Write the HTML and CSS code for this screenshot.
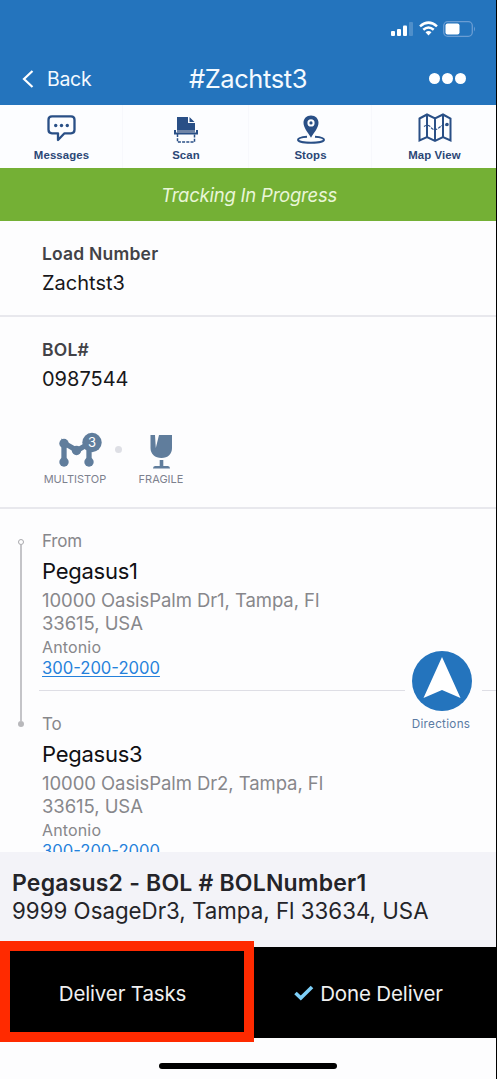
FILE: index.html
```html
<!DOCTYPE html>
<html lang="en">
<head>
<meta charset="utf-8">
<title>#Zachtst3</title>
<link rel="stylesheet" href="styles.css">
</head>
<body>
<div class="phone">
  <header class="header">
    <div class="status">
      <svg class="signal" width="22" height="14" viewBox="0 0 22 14" fill="#fff"><rect y="9" width="4" height="5" rx="1"/><rect x="6" y="7" width="4" height="7" rx="1"/><rect x="12" y="3.500" width="4" height="10.500" rx="1"/><rect x="18" width="4" height="14" rx="1" opacity=".2"/></svg>
      <svg class="wifi" width="19" height="15" viewBox="0 0 19 15" fill="none" stroke="#fff" stroke-width="2.500"><path d="M1 5.400Q9.500-2.200 18 5.400M4.300 8.800Q9.500 4.200 14.700 8.800"/><path d="M6.500 11.200Q9.500 8.800 12.500 11.200L9.500 14.500Z" fill="#fff" stroke="none"/></svg>
      <svg class="battery" width="33" height="16" viewBox="0 0 33 16"><rect x=".7" y=".7" width="28.600" height="14.600" rx="4" fill="none" stroke="#6a9dd3" stroke-width="1.300"/><rect x="2.500" y="2.500" width="14" height="11" rx="2" fill="#fff"/><path d="M31 5.500q2 2.500 0 5z" fill="#6a9dd3"/></svg>
    </div>
    <div class="nav">
      <div class="back"><svg width="12" height="18" viewBox="0 0 12 18" fill="none" stroke="#fff" stroke-width="2.200"><path d="M10.500 1 2 9l8.500 8"/></svg><span>Back</span></div>
      <h1 class="title">#Zachtst3</h1>
      <div class="more"><i></i><i></i><i></i></div>
    </div>
  </header>
  <nav class="tabs">
    <div class="tab"><svg width="36" height="36" viewBox="0 0 36 36" fill="none" stroke="#294f86" stroke-width="2.300" stroke-linejoin="round"><path d="M8 6.300h19q3.500 0 3.500 3.500v10q0 3.500-3.500 3.500h-6.500L14 30v-6.700H8q-3.500 0-3.500-3.500v-10Q4.500 6.300 8 6.300Z"/><g fill="#294f86" stroke="none"><circle cx="11.700" cy="15.500" r="1.700"/><circle cx="17.500" cy="15.500" r="1.700"/><circle cx="23.300" cy="15.500" r="1.700"/></g></svg><span>Messages</span></div>
    <div class="tab"><svg width="36" height="36" viewBox="0 0 36 36"><path d="M9 7h11v6h7v7H9zM21.500 7l5 5h-5z" fill="#294f86"/><path d="M7 20v3.500h22V20" fill="none" stroke="#294f86" stroke-width="2"/><path d="M9 20h18v3H9z" fill="#7085a7"/><path d="M9.500 24v8h17v-8" fill="none" stroke="#294f86" stroke-width="1.500" stroke-dasharray="3 1.200"/></svg><span>Scan</span></div>
    <div class="tab"><svg width="36" height="36" viewBox="0 0 36 36"><path d="M14 26.700c-5 .4-9 1.500-9 3 0 1.800 6 3 13 3s13-1.200 13-3c0-1.500-4-2.600-9-3" fill="none" stroke="#294f86" stroke-width="1.900"/><path fill-rule="evenodd" d="M18 5.500c4.500 0 7.500 3.200 7.500 7.300 0 5-4 9-7.500 15-3.500-6-7.500-10-7.500-15 0-4.100 3-7.300 7.500-7.300Zm0 3.800a3.600 3.600 0 1 0 0 7.200 3.600 3.600 0 0 0 0-7.200Z" fill="#294f86"/><circle cx="18" cy="12.900" r="1.600" fill="#294f86"/></svg><span>Stops</span></div>
    <div class="tab"><svg width="36" height="36" viewBox="0 0 36 36" fill="none" stroke="#294f86" stroke-width="2"><path d="M2.500 8.500 10 4.500l8 4 8-4 7.500 4v22L26 27l-8 4-8-4-7.500 3.500zM10 4.500V27M18 8.500V31M26 4.500V27"/><path d="M7 16.500q4-3 7 1t7 1 5-3.500h5" stroke-width="1.200" stroke-dasharray="3 1"/><circle cx="30" cy="14.500" r=".8"/></svg><span>Map View</span></div>
  </nav>
  <div class="tracking"><span>Tracking In Progress</span></div>
  <main class="content">
    <section class="field load"><div class="label"><span>Load Number</span></div><div class="value"><span>Zachtst3</span></div></section>
    <section class="field bol"><div class="label"><span>BOL#</span></div><div class="value"><span>0987544</span></div>
      <div class="badges">
        <div class="badge multistop"><svg width="52" height="38" viewBox="0 0 52 38"><path d="M11 31V12L24 19.500 37 12M36 18v13" fill="none" stroke="#607d9c" stroke-width="5.300"/><g fill="#607d9c"><circle cx="11" cy="12.500" r="4.700"/><circle cx="11" cy="31" r="4.700"/><circle cx="23.500" cy="19.500" r="4.700"/><circle cx="36" cy="31" r="4.700"/><circle cx="39" cy="11.500" r="9.700"/></g><text x="39" y="16.200" text-anchor="middle" class="count">3</text></svg><span>MULTISTOP</span></div>
        <div class="dot"></div>
        <div class="badge fragile"><svg width="46" height="38" viewBox="0 0 46 38" fill="#607d9c"><path d="M12.500 4H17l.8 13L21 4h13v13c0 6-4 10-10.500 10S12.500 23 12.500 17zM21.700 29h3.600v6H30q2 0 2 2.500H15q0-2.500 2-2.500h4.700z"/></svg><span>FRAGILE</span></div>
      </div>
    </section>
    <section class="route">
      <div class="track"><i class="start"></i><i class="rail"></i><i class="end"></i></div>
      <div class="stops">
        <article class="stop"><div class="direction">From</div><h2>Pegasus1</h2><p class="address">10000 OasisPalm Dr1, Tampa, Fl<br>33615, USA</p><p class="contact">Antonio</p><p class="phone-no"><a>300-200-2000</a></p><div class="rule"></div></article>
        <article class="stop"><div class="direction">To</div><h2>Pegasus3</h2><p class="address">10000 OasisPalm Dr2, Tampa, Fl<br>33615, USA</p><p class="contact">Antonio</p><p class="phone-no"><a>300-200-2000</a></p></article>
      </div>
      <div class="directions"><svg width="60" height="60" viewBox="0 0 60 60"><circle cx="30" cy="30" r="30" fill="#2474bd"/><path d="M30 6 48.500 47 30 39 11.500 47Z" fill="#fff"/></svg><span>Directions</span></div>
    </section>
  </main>
  <section class="current"><strong>Pegasus2 - BOL # BOLNumber1</strong><span>9999 OsageDr3, Tampa, Fl 33634, USA</span></section>
  <div class="actions"><div class="action"><span>Deliver Tasks</span></div><div class="action done"><svg width="20" height="16" viewBox="0 0 20 16" fill="none" stroke="#7dcff8" stroke-width="3.600"><path d="m1.500 8 5.300 5L18 2"/></svg><span>Done Deliver</span></div><div class="highlight"></div></div>
  <footer class="home"><i></i></footer>
</div>
</body>
</html>
```
FILE: styles.css
```css
* { box-sizing: border-box; }
body { margin: 0; background: #fdfdfe; font-family: Inter, "Liberation Sans", sans-serif; }
h1, h2, p { margin: 0; font-weight: 400; }
span, a { white-space: nowrap; }
svg, i { display: block; flex: none; }
.phone { width: 497px; height: 1079px; display: flex; flex-direction: column; overflow: hidden; border-right: 1px solid #000; background: #fdfdfe; }
.header { height: 105px; flex: none; background: #2474bd; color: #f4faff; }
.status { display: flex; justify-content: flex-end; align-items: flex-start; padding: 21px 20px 0 0; height: 56px; }
.signal { margin: 1px 6px 0 0; }
.wifi { margin-right: 5px; }
.nav { height: 45px; display: grid; grid-template-columns: 160px 1fr 160px; align-items: center; }
.back { display: flex; align-items: center; gap: 13px; padding-left: 22px; font-size: 19.500px; letter-spacing: -.3px; }
.title { text-align: center; font-size: 25.500px; letter-spacing: -.4px; }
.more { display: flex; gap: 2px; justify-content: flex-end; padding-right: 30px; }
.more i { width: 11px; height: 11px; border-radius: 50%; background: #fff; }
.tabs { height: 63px; flex: none; display: grid; grid-template-columns: 123px 126px 123px 124px; background: #fcfdff; }
.tab { display: flex; flex-direction: column; align-items: center; padding: 5px 0 0 1px; color: #2b4776; font: bold 11.400px/14px "Liberation Sans", sans-serif; letter-spacing: .1px; border-right: 1px solid #f7f8fc; }
.tab span { margin-top: 2px; }
.tab:last-child { border: 0; }
.tracking { height: 53px; flex: none; background: #74b035; color: #e9f6d8; display: flex; align-items: center; justify-content: center; padding: 1px 0 0 2px; font-size: 18.500px; font-style: italic; letter-spacing: -.22px; }
.content { flex: none; height: 631px; overflow: hidden; }
.field { padding: 22px 42px 0; border-bottom: 2px solid #e8e8ed; }
.load { height: 96px; }
.bol { height: 192px; }
.label { height: 22px; line-height: 22px; font-size: 17.500px; font-weight: 600; color: #424247; letter-spacing: .2px; }
.value { height: 22px; margin-top: 7px; line-height: 22px; font-size: 20px; color: #17171a; }
.badges { display: flex; align-items: flex-start; margin-top: 41px; }
.badge { width: 66px; display: flex; flex-direction: column; align-items: center; color: #7d818e; font-size: 11px; line-height: 14px; }
.badge span { margin-top: 3px; }
.multistop svg { margin-left: 8px; }
.badge.fragile { width: 46px; margin-left: 16px; }
.count { font: 13px Inter, sans-serif; fill: #fff; }
.dot { width: 7px; height: 7px; border-radius: 50%; background: #dedfe5; margin: 15px 0 0 7px; }
.route { display: grid; grid-template-columns: 42px 1fr; position: relative; color: #87878b; }
.track { padding: 30px 0 0 18px; display: flex; flex-direction: column; }
.start { width: 6px; height: 6px; border: 1px solid #a9a9ad; border-radius: 50%; }
.rail { width: 2px; height: 176px; margin-left: 2px; background: #c4c4c8; }
.end { width: 6px; height: 6px; border-radius: 50%; background: #b8b8bb; }
.stop { height: 182.500px; padding-top: 21px; }
.direction { height: 22px; line-height: 22px; font-size: 17px; letter-spacing: -.2px; }
.stop h2 { height: 26px; margin-top: 6px; line-height: 26px; font-size: 22px; color: #101014; letter-spacing: -.25px; }
.address { margin-top: 5px; font-size: 18.500px; line-height: 23px; letter-spacing: -.07px; }
.contact { height: 22px; margin-top: 1px; line-height: 22px; font-size: 16px; letter-spacing: .15px; }
.phone-no { height: 20px; line-height: 20px; font-size: 16.600px; color: #2581db; }
.phone-no a { text-decoration: underline; text-underline-offset: 2px; }
.rule { height: 1px; margin: 12px 0 0 -3px; background: #dedee5; }
.directions { position: absolute; left: 405px; top: 142px; width: 77px; display: flex; flex-direction: column; align-items: center; background: #fdfdfe; color: #5b7ba3; font-size: 11.700px; line-height: 16px; letter-spacing: .3px; }
.directions svg { margin-left: -3px; }
.directions span { margin: 5px 0 0 -5px; }
.current { height: 95px; flex: none; padding: 17px 12px 0; background: #f3f3f8; color: #242429; display: flex; flex-direction: column; align-items: flex-start; font-size: 22.300px; line-height: 28px; letter-spacing: 0; }
.current strong { font-weight: 600; line-height: 28px; font-size: 23px; letter-spacing: .2px; }
.actions { height: 91px; flex: none; position: relative; display: flex; background: #000; color: #f0f0f0; font-size: 20.500px; letter-spacing: -.15px; }
.action { width: 245px; display: flex; align-items: center; justify-content: center; padding-top: 1px; }
.action.done { width: 247px; gap: 6px; }
.highlight { position: absolute; left: 0; top: -6px; width: 254px; height: 101px; border: 10px solid #ff2a00; }
.home { flex: 1; padding: 25px 0 0 159px; background: #fdfdfe; }
.home i { width: 178px; height: 6px; border-radius: 3px; background: #000; }
```
